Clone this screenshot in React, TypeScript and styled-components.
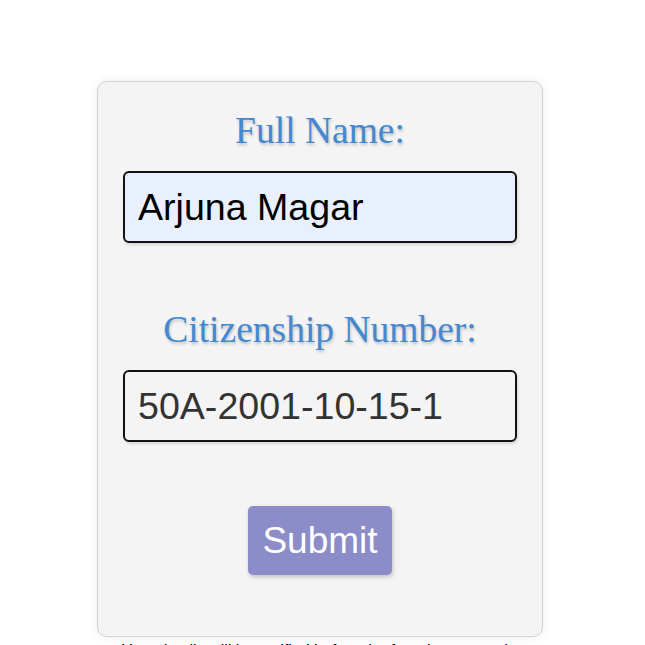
import React from "react";
import styled, { createGlobalStyle } from "styled-components";

const Global = createGlobalStyle`
  html, body { margin: 0; padding: 0; background: #ffffff; }
  body { font-family: "Liberation Sans", Arial, sans-serif; overflow: hidden; }
`;

const Page = styled.div`
  width: 645px;
  height: 645px;
  padding: 81px 0 0 97px;
  box-sizing: border-box;
`;

const Card = styled.form`
  width: 446px;
  height: 556px;
  box-sizing: border-box;
  background: #f4f4f4;
  border: 1px solid #d2d2d2;
  border-radius: 10px;
  box-shadow: 0 0 12px rgba(0, 0, 0, 0.08);
  display: flex;
  flex-direction: column;
  align-items: center;
  padding: 28px 25px 0;
`;

const Label = styled.label<{ $gap?: number }>`
  display: block;
  margin-top: ${(p) => p.$gap ?? 0}px;
  font-family: "Liberation Serif", "Times New Roman", serif;
  font-size: 37.5px;
  line-height: 42px;
  color: #4489d0;
  text-shadow: 1px 2px 3px rgba(0, 0, 0, 0.22);
  text-align: center;
`;

const Input = styled.input<{ $filled?: boolean }>`
  margin-top: 19px;
  width: 394px;
  height: 72px;
  box-sizing: border-box;
  border: 2px solid #111;
  border-radius: 6px;
  padding: 0 13px;
  background: ${(p) => (p.$filled ? "#e8f0fe" : "#f4f4f4")};
  color: ${(p) => (p.$filled ? "#000" : "#333")};
  font-family: "Liberation Sans", Arial, sans-serif;
  font-size: 37.6px;
  box-shadow: 1px 2px 3px rgba(0, 0, 0, 0.12);
  outline: none;
`;

const Button = styled.button`
  margin-top: 64px;
  height: 69px;
  padding: 0 14px;
  border: none;
  border-radius: 5px;
  background: #8c8cc8;
  color: #ffffff;
  font-family: "Liberation Sans", Arial, sans-serif;
  font-size: 37px;
  box-shadow: 1px 2px 4px rgba(0, 0, 0, 0.2);
  cursor: pointer;
`;

const Note = styled.p`
  margin: 5px 0 0 -70px;
  width: 580px;
  text-align: center;
  font-family: "Liberation Sans", Arial, sans-serif;
  font-size: 16px;
  line-height: 18px;
  color: #000;
`;

export default function App() {
  return (
    <>
      <Global />
      <Page>
        <Card onSubmit={(e) => e.preventDefault()}>
          <Label htmlFor="name">Full Name:</Label>
          <Input id="name" $filled defaultValue="Arjuna Magar" />
          <Label htmlFor="cit" $gap={66}>Citizenship Number:</Label>
          <Input id="cit" defaultValue="50A-2001-10-15-1" />
          <Button type="submit">Submit</Button>
        </Card>
        <Note>Your details will be verified before the form is accepted.</Note>
      </Page>
    </>
  );
}
